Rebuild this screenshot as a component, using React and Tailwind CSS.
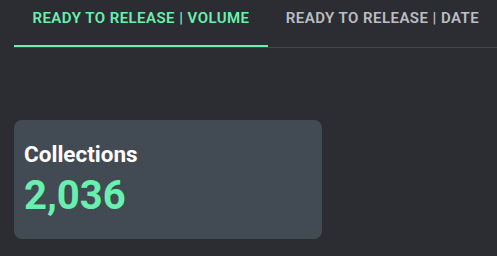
export default function App() {
  return (
    <div className="w-[497px] h-[256px] bg-[#2c2d32] overflow-hidden" style={{ fontFamily: "Roboto, 'Liberation Sans', sans-serif" }}>
      <div className="ml-[14px] flex border-b border-[#45474c]">
        <div className="relative h-[47px] w-[254px] flex justify-center pt-[8px]">
          <span className="text-[15px] leading-[20px] font-semibold tracking-[0.45px] text-[#69f0ae] whitespace-nowrap">READY TO RELEASE | VOLUME</span>
          <div className="absolute left-0 right-0 bottom-0 h-[2px] bg-[#69f0ae]" />
        </div>
        <div className="relative h-[47px] w-[229px] flex justify-center pt-[8px]">
          <span className="text-[15px] leading-[20px] font-semibold tracking-[0.45px] text-[#bdbec2] whitespace-nowrap">READY TO RELEASE | DATE</span>
        </div>
      </div>
      <div className="ml-[14px] mt-[72px] w-[308px] h-[119px] rounded-[8px] bg-[#424b54] px-[10px] pt-[21px]">
        <div className="text-[22.5px] leading-[26px] font-bold text-white">Collections</div>
        <div className="mt-[5px] text-[40px] leading-[48px] font-bold text-[#69f0ae]">2,036</div>
      </div>
    </div>
  );
}
